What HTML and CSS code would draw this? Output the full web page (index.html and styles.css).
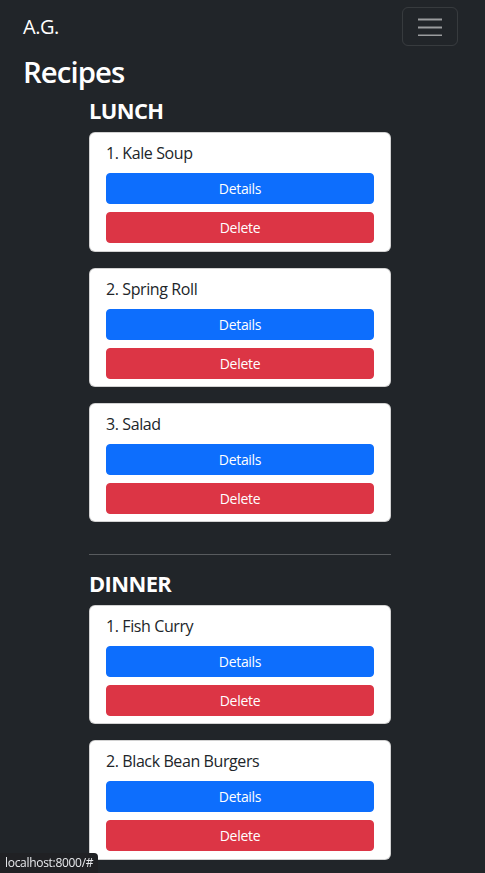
FILE: index.html
```html
<!DOCTYPE html>
<html lang="en">
<head>
<meta charset="utf-8">
<title>Recipes</title>
<link rel="stylesheet" href="styles.css">
</head>
<body>
<nav class="navbar">
  <a class="brand" href="#">A.G.</a>
  <button class="toggler" type="button" aria-label="Toggle navigation">
    <svg class="toggler-icon" width="24" height="18" viewBox="0 0 24 18">
      <path d="M0 1.5h24M0 9.5h24M0 17.5h24" stroke="rgba(255,255,255,0.55)" stroke-width="2"/>
    </svg>
  </button>
</nav>
<main class="container">
  <h1 class="page-title">Recipes</h1>
  <div class="column">
    <section class="category">
      <h4 class="category-title">LUNCH</h4>
      <div class="card"><div class="card-body"><p class="recipe-name">1. Kale Soup</p><button class="btn btn-primary">Details</button><button class="btn btn-danger">Delete</button></div></div>
      <div class="card"><div class="card-body"><p class="recipe-name">2. Spring Roll</p><button class="btn btn-primary">Details</button><button class="btn btn-danger">Delete</button></div></div>
      <div class="card"><div class="card-body"><p class="recipe-name">3. Salad</p><button class="btn btn-primary">Details</button><button class="btn btn-danger">Delete</button></div></div>
    </section>
    <hr class="divider">
    <section class="category">
      <h4 class="category-title">DINNER</h4>
      <div class="card"><div class="card-body"><p class="recipe-name">1. Fish Curry</p><button class="btn btn-primary">Details</button><button class="btn btn-danger">Delete</button></div></div>
      <div class="card"><div class="card-body"><p class="recipe-name">2. Black Bean Burgers</p><button class="btn btn-primary">Details</button><button class="btn btn-danger">Delete</button></div></div>
    </section>
  </div>
</main>
<div class="status-bar">localhost:8000/#</div>
</body>
</html>
```
FILE: styles.css
```css
* { box-sizing: border-box; }
html, body { height: 100%; }
body {
  margin: 0;
  background: #212529;
  color: #fff;
  font-family: "Open Sans", "Noto Sans", sans-serif;
  font-size: 16px;
  line-height: 1.5;
  overflow: hidden;
}
.navbar {
  display: flex;
  justify-content: space-between;
  align-items: flex-start;
  height: 55px;
  padding: 7px 27px 0 23px;
}
.brand {
  color: #fff;
  text-decoration: none;
  font-size: 20px;
  line-height: 39px;
  letter-spacing: -0.5px;
}
.toggler {
  width: 56px;
  height: 39px;
  padding: 0;
  background: transparent;
  border: 1px solid rgba(255,255,255,0.1);
  border-radius: 6px;
  display: flex;
  align-items: center;
  justify-content: center;
}
.toggler-icon { display: block; margin-top: 1px; }
.container { padding: 0 23px; }
.page-title {
  margin: 0;
  font-size: 29.3px;
  line-height: 1.2;
  font-weight: 600;
  letter-spacing: -0.9px;
}
.column {
  width: 302px;
  margin: 8px 0 0 66px;
}
.category-title {
  margin: 0 0 8px;
  font-size: 21.9px;
  line-height: 1.2;
  font-weight: 700;
  letter-spacing: -0.6px;
}
.card {
  background: #fff;
  border: 1px solid rgba(0,0,0,0.175);
  border-radius: 6px;
  margin-bottom: 16px;
}
.card-body {
  padding: 8px 16px 7.2px;
  display: flex;
  flex-direction: column;
  gap: 8px;
}
.recipe-name {
  margin: 0;
  color: #212529;
  font-size: 16px;
  line-height: 24px;
  letter-spacing: -0.4px;
}
.btn {
  display: block;
  width: 100%;
  height: 31px;
  border: 1px solid transparent;
  border-radius: 4px;
  color: #fff;
  font-family: inherit;
  font-size: 14px;
  line-height: 21px;
  padding: 4px 8px;
  letter-spacing: -0.3px;
}
.btn-primary { background: #0d6efd; border-color: #0d6efd; }
.btn-danger { background: #dc3545; border-color: #dc3545; }
.divider {
  margin: 32px 0 16px;
  border: 0;
  border-top: 1px solid rgba(255,255,255,0.25);
}
.status-bar {
  position: fixed;
  left: 0;
  bottom: 0;
  height: 20px;
  padding: 0 5px;
  background: #202124;
  color: #e8eaed;
  font-size: 12px;
  line-height: 20px;
  border-top-right-radius: 4px;
  letter-spacing: -0.3px;
}
```
